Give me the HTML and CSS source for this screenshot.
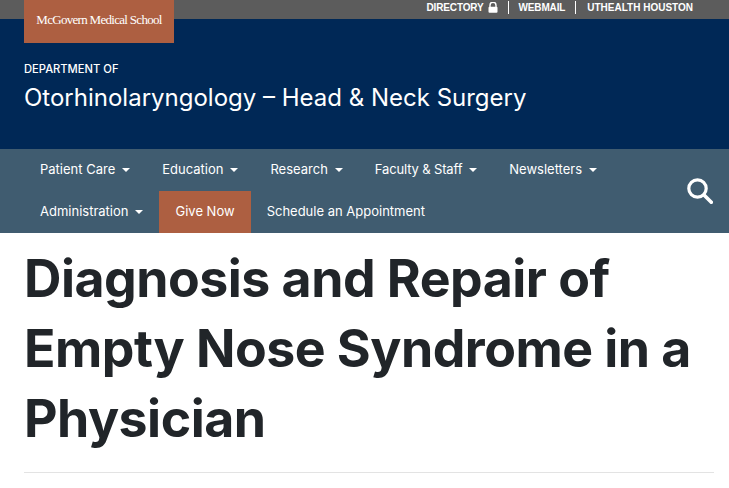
FILE: index.html
```html
<!DOCTYPE html>
<html lang="en">
<head>
  <meta charset="UTF-8" />
  <meta name="viewport" content="width=device-width, initial-scale=1.0"/>
  <title>Diagnosis and Repair of Empty Nose Syndrome in a Physician</title>
  <link rel="stylesheet" href="styles.css">
</head>
<body>
  <div class="top-bar">
    <a class="school-tab" href="#">McGovern Medical School</a>
    <ul class="top-links">
      <li>
        <a href="#">Directory</a>
        <svg class="lock" viewBox="0 0 10 11" width="10" height="11" aria-hidden="true">
          <path d="M2 5V3.2a3 3 0 0 1 6 0V5" fill="none" stroke="#fff" stroke-width="1.4"/>
          <rect x="0.5" y="4.8" width="9" height="6" rx="1" fill="#fff"/>
        </svg>
      </li>
      <li><a href="#">Webmail</a></li>
      <li><a href="#">UTHealth Houston</a></li>
    </ul>
  </div>

  <header class="dept-header">
    <div class="dept-small">DEPARTMENT OF</div>
    <div class="dept-name">Otorhinolaryngology – Head &amp; Neck Surgery</div>
  </header>

  <nav class="main-nav">
    <ul class="nav-list">
      <li><a class="caret" href="#">Patient Care</a></li>
      <li><a class="caret" href="#">Education</a></li>
      <li><a class="caret" href="#">Research</a></li>
      <li><a class="caret tight" href="#">Faculty &amp; Staff</a></li>
      <li><a class="caret" href="#">Newsletters</a></li>
      <li><a class="caret" href="#">Administration</a></li>
      <li><a class="give" href="#">Give Now</a></li>
      <li><a href="#">Schedule an Appointment</a></li>
    </ul>
    <a class="search" href="#" aria-label="Search">
      <svg viewBox="0 0 26 26" width="26" height="26" aria-hidden="true">
        <circle cx="10.5" cy="10.5" r="8.7" fill="none" stroke="#fff" stroke-width="3.2"/>
        <path d="M17 17L24.3 24.3" fill="none" stroke="#fff" stroke-width="3.6" stroke-linecap="round"/>
      </svg>
    </a>
  </nav>

  <main class="content">
    <h1>Diagnosis and Repair of Empty Nose Syndrome in a Physician</h1>
    <hr class="rule">
  </main>
</body>
</html>
```

FILE: styles.css
```css
* {
  box-sizing: border-box;
}

body {
  margin: 0;
  font-family: "Inter", "Open Sans", sans-serif;
  background: #fff;
  color: #212529;
}

a {
  color: inherit;
  text-decoration: none;
}

ul {
  list-style: none;
  margin: 0;
  padding: 0;
}

/* Top grey strip */
.top-bar {
  display: flex;
  justify-content: space-between;
  height: 19px;
  padding: 0 24px;
  background: #5c5c5c;
  color: #fff;
}

.school-tab {
  position: relative;
  z-index: 1;
  display: block;
  width: 150px;
  height: 43px;
  padding-top: 12px;
  background: #ad5f41;
  font-family: "Liberation Serif", serif;
  font-size: 13px;
  letter-spacing: -0.7px;
  line-height: 16px;
  text-align: center;
  white-space: nowrap;
}

.top-links {
  display: flex;
  align-items: center;
  height: 15px;
  margin-right: 12px;
  font-family: "Liberation Sans", sans-serif;
  font-size: 10px;
  font-weight: 700;
  letter-spacing: -0.15px;
  text-transform: uppercase;
}

.top-links li {
  display: flex;
  align-items: center;
  gap: 4px;
  height: 13px;
  padding: 0 10px;
  border-left: 1px solid #fff;
}

.top-links li:first-child {
  border-left: none;
}

.top-links li:last-child {
  padding-left: 11px;
  padding-right: 0;
  letter-spacing: 0;
}

/* Department banner */
.dept-header {
  height: 130px;
  padding: 43px 24px 0;
  background: #002856;
  color: #fff;
}

.dept-small {
  font-size: 11.2px;
  line-height: 14px;
  font-weight: 500;
}

.dept-name {
  margin-top: 7px;
  font-size: 24px;
  line-height: 30px;
}

/* Main nav */
.main-nav {
  position: relative;
  height: 84px;
  padding: 0 24px;
  background: #405c70;
  color: #fff;
}

.nav-list {
  display: flex;
  flex-wrap: wrap;
  width: 640px;
}

.nav-list a {
  display: block;
  height: 42px;
  padding: 0 16px;
  font-size: 13px;
  line-height: 41px;
}

.nav-list .tight {
  letter-spacing: -0.15px;
}

.nav-list .caret::after {
  content: "";
  display: inline-block;
  margin-left: 7px;
  vertical-align: 2px;
  border-top: 4px solid #fff;
  border-left: 4px solid transparent;
  border-right: 4px solid transparent;
}

.nav-list .give {
  background: #ad5f41;
}

.search {
  position: absolute;
  right: 16px;
  top: 29px;
  line-height: 0;
}

/* Article heading */
.content {
  padding: 0 15px 0 24px;
}

h1 {
  margin: 10px 0 0;
  font-size: 51.8px;
  line-height: 70px;
  font-weight: 700;
  letter-spacing: -0.5px;
}

.rule {
  margin: 19px 0 0;
  border: none;
  border-top: 1px solid #e3e3e3;
}
```
